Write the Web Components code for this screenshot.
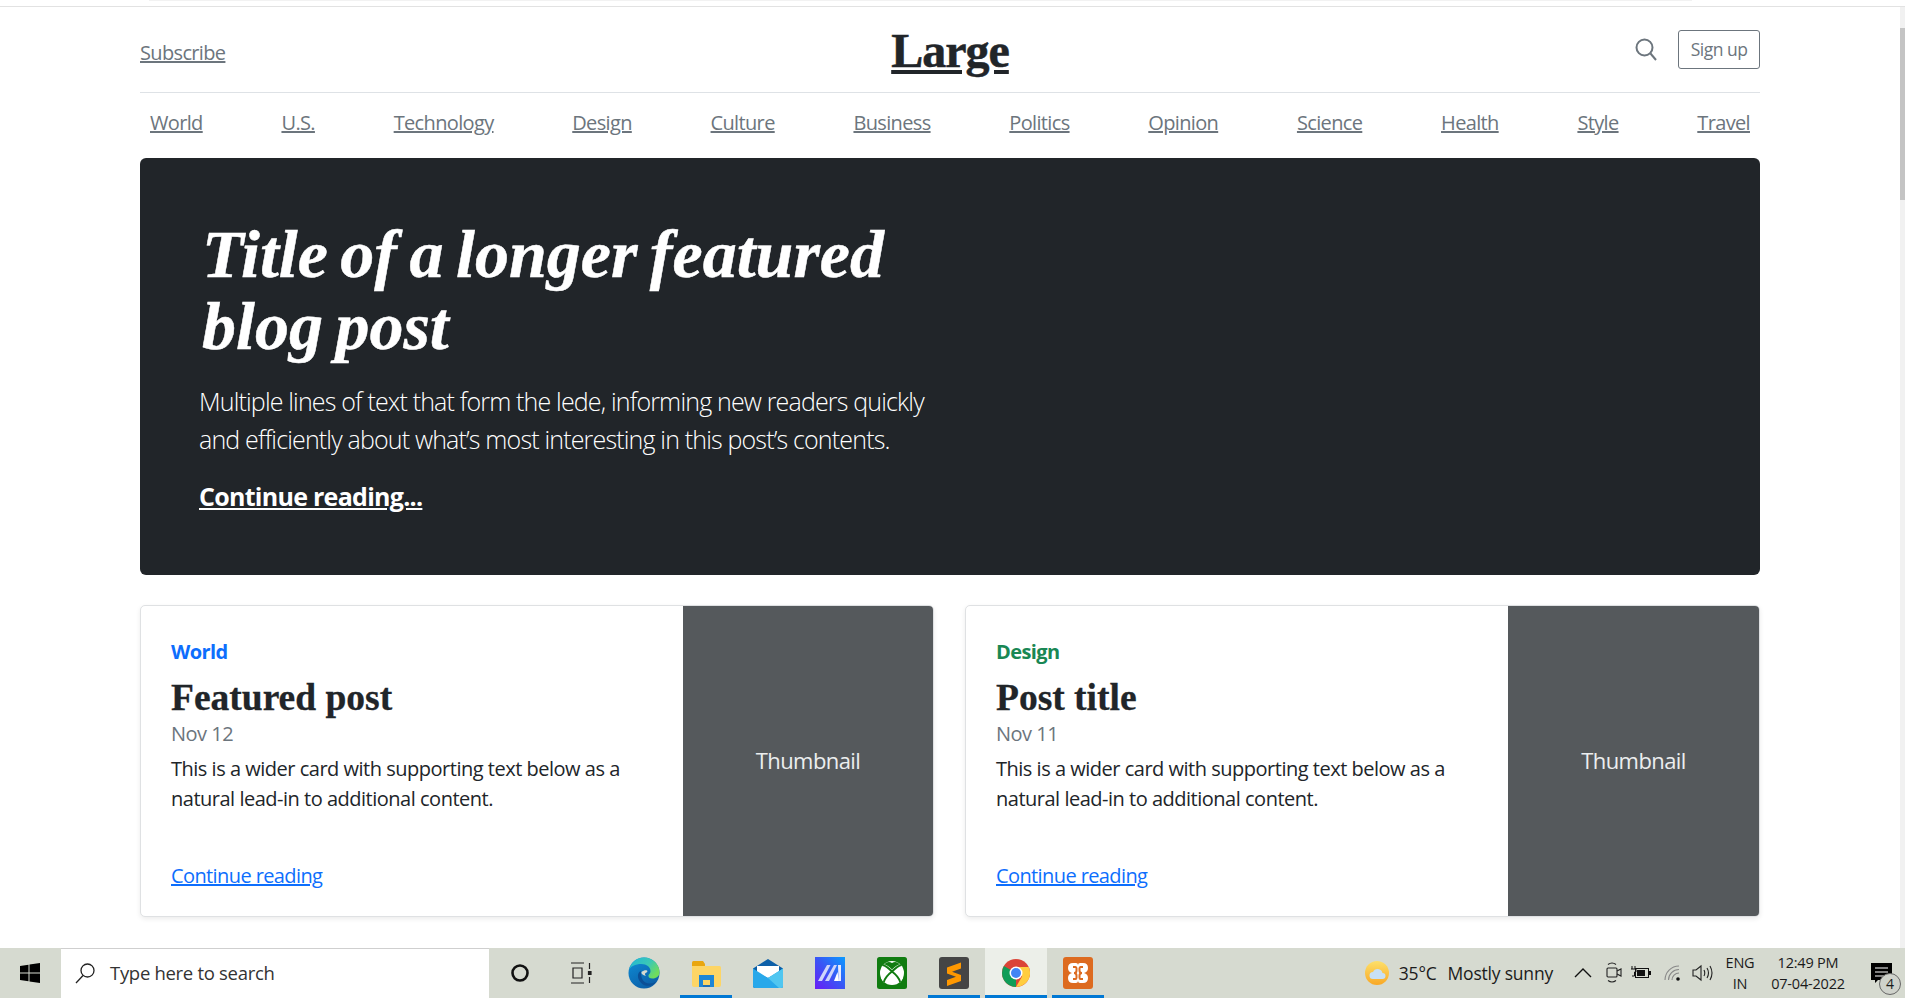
<!DOCTYPE html>
<html lang="en">
<head>
<meta charset="utf-8">
<title>Large</title>
<style>
    html, body { margin: 0; height: 100%; overflow: hidden; background: #fff; }
    body {
        display: flex;
        flex-direction: column;
        font-family: "Open Sans", "Liberation Sans", sans-serif;
        color: #212529;
    }
</style>
</head>
<body>
<blog-browser>
    <blog-header></blog-header>
    <blog-nav></blog-nav>
    <blog-hero></blog-hero>
    <div slot="cards">
        <blog-card category="World" color="#0d6efd" title="Featured post" date="Nov 12" thumb="250"></blog-card>
        <blog-card category="Design" color="#198754" title="Post title" date="Nov 11" thumb="251"></blog-card>
    </div>
</blog-browser>
<win-taskbar></win-taskbar>

<script>
// small helper, every element just sets its shadow html
class Base extends HTMLElement {
    render(html) {
        this.attachShadow({ mode: 'open' });
        this.shadowRoot.innerHTML = html;
    }
}

class BlogBrowser extends Base {
    constructor() {
        super();
        this.render(`
            <style>
                :host { display: flex; flex: 1; min-height: 0; flex-direction: column; }
                .chrome { height: 1px; margin: 0 213px 0 149px; background: #f2f2f2; flex: none; }
                .gap { height: 5px; flex: none; }
                .line { height: 1px; background: #e2e2e2; flex: none; }
                .row { display: flex; flex: 1; min-height: 0; }
                .page { flex: 1; min-width: 0; padding: 0 140px 0 140px; overflow: hidden; }
                .bar { width: 5px; flex: none; background: #f1f1f1; padding-top: 21px; box-sizing: border-box; }
                .thumb { height: 172px; background: #c4c4c4; }
                ::slotted([slot=cards]) { display: grid; grid-template-columns: 794px 795px; column-gap: 31px; }
            </style>
            <div class="chrome"></div>
            <div class="gap"></div>
            <div class="line"></div>
            <div class="row">
                <div class="page"><slot></slot><slot name="cards"></slot></div>
                <div class="bar"><div class="thumb"></div></div>
            </div>
        `);
    }
}

class BlogHeader extends Base {
    constructor() {
        super();
        this.render(`
            <style>
                :host { display: grid; grid-template-columns: 1fr auto 1fr; align-items: center; height: 85px; border-bottom: 1px solid #dee2e6; box-sizing: content-box; }
                a { color: #6c757d; }
                .sub { font-size: 20px; letter-spacing: -.65px; padding-top: 5px; }
                .logo { font: 700 48px "Liberation Serif", serif; color: #212529; line-height: 1; letter-spacing: -1px; -webkit-text-stroke: .5px #212529; padding-top: 2px; }
                .right { display: flex; justify-content: flex-end; align-items: center; gap: 20px; padding-bottom: 1px; }
                .btn { display: block; width: 82px; height: 39px; box-sizing: border-box; border: 1px solid #6c757d; border-radius: 3px; color: #6c757d; font-size: 17.5px; letter-spacing: -.5px; text-align: center; line-height: 36px; }
                svg { display: block; }
            </style>
            <a class="sub" href="#">Subscribe</a>
            <a class="logo" href="#">Large</a>
            <div class="right">
                <svg width="24" height="24" viewBox="0 0 24 24" fill="none" stroke="#6c757d" stroke-width="2"><circle cx="10.5" cy="10.5" r="8"/><path d="M16.500 16.500L22 23"/></svg>
                <span class="btn">Sign up</span>
            </div>
        `);
    }
}

class BlogNav extends Base {
    constructor() {
        super();
        const items = ['World', 'U.S.', 'Technology', 'Design', 'Culture', 'Business', 'Politics', 'Opinion', 'Science', 'Health', 'Style', 'Travel'];
        this.render(`
            <style>
                :host { display: flex; justify-content: space-between; padding: 0 10px; height: 65px; align-items: flex-start; }
                a { color: #6c757d; font-size: 20px; letter-spacing: -.65px; line-height: 30px; margin-top: 15px; }
            </style>
            ${items.map(i => `<a href="#">${i}</a>`).join('')}
        `);
    }
}

class BlogHero extends Base {
    constructor() {
        super();
        this.render(`
            <style>
                :host { display: block; height: 417px; box-sizing: border-box; background: #212529; border-radius: 6px; padding: 60px 60px 60px 59px; color: #fff; margin-bottom: 30px; }
                h1 { margin: 0 0 21px 3px; font: italic 700 68px/72px "Liberation Serif", serif; width: 760px; word-spacing: -4.500px; -webkit-text-stroke: .5px #fff; }
                p { margin: 0 0 20px; font-size: 25px; line-height: 37.5px; font-weight: 300; width: 760px; letter-spacing: -.83px; }
                a { color: #fff; font-weight: 700; font-size: 25px; letter-spacing: -.72px; }
                .more { margin: 0; font-size: 20px; line-height: 37px; }
            </style>
            <h1>Title of a longer featured blog post</h1>
            <p>Multiple lines of text that form the lede, informing new readers quickly and efficiently about what’s most interesting in this post’s contents.</p>
            <div class="more"><a href="#">Continue reading...</a></div>
        `);
    }
}

class BlogCard extends Base {
    constructor() {
        super();
        const a = n => this.getAttribute(n);
        this.render(`
            <style>
                :host { display: flex; height: 312px; box-sizing: border-box; border: 1px solid #dfe1e3; border-radius: 5px; box-shadow: 0 2px 5px rgba(0,0,0,.08); overflow: hidden; background: #fff; }
                .body { flex: 1; min-width: 0; padding: 31px 30px 25px 30px; display: flex; flex-direction: column; font-size: 20px; line-height: 30px; letter-spacing: -.49px; }
                .cat { font-weight: 700; color: ${a('color')}; margin-bottom: 10px; line-height: 30px; letter-spacing: -.6px; }
                h3 { margin: 0; font: 700 37.500px/42px "Liberation Serif", serif; letter-spacing: 0; -webkit-text-stroke: .3px #212529; }
                .date { color: #6c757d; margin-bottom: 5px; }
                p { margin: 0; }
                a { color: #0d6efd; margin-top: auto; letter-spacing: -.6px; }
                .thumb { width: ${a('thumb')}px; flex: none; background: #55595c; color: #eceeef; display: flex; align-items: center; justify-content: center; font-size: 22px; letter-spacing: -.6px; padding-bottom: 3px; box-sizing: border-box; }
            </style>
            <div class="body">
                <div class="cat">${a('category')}</div>
                <h3>${a('title')}</h3>
                <div class="date">${a('date')}</div>
                <p>This is a wider card with supporting text below as a natural lead-in to additional content.</p>
                <a href="#">Continue reading</a>
            </div>
            <div class="thumb">Thumbnail</div>
        `);
    }
}

class TaskSlot extends Base {
    constructor() {
        super();
        this.render(`
            <style>
                :host { display: flex; width: 62px; height: 50px; align-items: center; justify-content: center; flex: none; box-sizing: border-box; position: relative; }
                :host([running])::after { content: ''; position: absolute; left: 5px; right: 5px; bottom: 0; height: 3px; background: #0078d4; }
                :host([active]) { background: #ecefe9; }
                :host([active])::after { left: 0; right: 0; }
            </style>
            <slot></slot>
        `);
    }
}

class WinTaskbar extends Base {
    constructor() {
        super();
        this.render(`
            <style>
                :host { display: flex; height: 50px; flex: none; background: #d6dad0; font-size: 17.500px; color: #1b1b1b; letter-spacing: -.2px; }
                svg { display: block; flex: none; }
                .start { width: 61px; display: flex; align-items: center; justify-content: center; flex: none; padding-right: 2px; box-sizing: border-box; }
                .search { width: 428px; flex: none; background: #fff; border-top: 1px solid #cfcfcf; box-sizing: border-box; display: flex; align-items: center; padding-left: 13px; padding-bottom: 2px; gap: 14px; font-size: 18.500px; color: #333; letter-spacing: -.3px; }
                .tray { margin-left: auto; display: flex; align-items: center; padding-bottom: 1px; }
                .wx { margin-right: 10px; margin-left: 0; }
                .two { display: flex; flex-direction: column; align-items: center; font-size: 14.500px; line-height: 21px; letter-spacing: -.2px; }
                .note { position: relative; width: 40px; height: 50px; display: flex; align-items: center; justify-content: center; margin-left: 14px; margin-right: 4px; }
                .badge { position: absolute; right: 0; bottom: 3px; width: 22px; height: 22px; box-sizing: border-box; border-radius: 50%; background: #cfd2cb; border: 1px solid #666; font-size: 14px; line-height: 20px; text-align: center; letter-spacing: 0; }
            </style>
            <div class="start">
                <svg width="20" height="20" viewBox="0 0 20 20" fill="#000"><path d="M0 3l8.500-1.200v7.800H0zM9.500 1.600L20 0v9.600H9.500zM0 10.500h8.500v7.800L0 17zM9.500 10.500H20V20L9.500 18.500z"/></svg>
            </div>
            <div class="search">
                <svg width="22" height="22" viewBox="0 0 22 22" fill="none" stroke="#222" stroke-width="1.300"><circle cx="13.500" cy="8.500" r="6.500"/><path d="M9 13.500L2 21"/></svg>
                <span>Type here to search</span>
            </div>
            <task-slot>
                <svg width="20" height="20" viewBox="0 0 20 20" fill="none" stroke="#111" stroke-width="2.600"><circle cx="10" cy="10" r="7.500"/></svg>
            </task-slot>
            <task-slot>
                <svg width="24" height="22" viewBox="0 0 24 22" fill="none" stroke="#222" stroke-width="1.200"><path d="M1 1h13M1 21h13M3 6h9v10H3z"/><path d="M19.500 1v6M19.500 15v6"/><path d="M18.500 9.500h2.500v3h-2.500z" fill="#222"/></svg>
            </task-slot>
            <task-slot>
                <svg width="34" height="34" viewBox="0 0 34 34">
                    <defs>
                        <linearGradient id="eg" x1="0" y1="0" x2="1" y2=".6"><stop offset="0" stop-color="#1fb6d8"/><stop offset=".6" stop-color="#3bc8b5"/><stop offset="1" stop-color="#70dc5c"/></linearGradient>
                        <linearGradient id="eb" x1="0" y1="0" x2=".6" y2="1"><stop offset="0" stop-color="#0f8fd8"/><stop offset="1" stop-color="#0b5fa8"/></linearGradient>
                    </defs>
                    <circle cx="17" cy="17" r="15.500" fill="url(#eb)"/>
                    <path d="M2 14C4 6 10 1.500 17 1.500c9 0 15.500 7 15.500 15 0 3.500-3 6-7 6-3 0-4-1-4-2.500 0-2 2-2 2-5 0-4-4-7-9-7C8 8 3.500 10.500 2 14z" fill="url(#eg)"/>
                    <path d="M14 15c-3 1-4 5-2 9 2.500 5 9 8 15 4 1-.7 1.500-1.500 1.500-2-2 1-4 1.500-6 1.500-6 0-9-5-8.500-12.500z" fill="#0b4f96"/>
                    <path d="M14.500 16c1.500-1.500 3.500-2 5-1.800 1.500.3 1 2-.5 2.500-1.200.5-1.500 2 0 3-1.500 0-5-1-4.500-3.700z" fill="#d6dad0"/>
                </svg>
            </task-slot>
            <task-slot running>
                <svg width="29" height="27" viewBox="0 0 29 27">
                    <path d="M0 2.500Q0 1 1.500 1H11l2 3v2H0z" fill="#e9a60f"/>
                    <path d="M0 6h27.500Q29 6 29 7.500V25q0 2-2 2H2q-2 0-2-2z" fill="#fdd565"/>
                    <path d="M7 15h15v12h-4v-7h-7v7H7z" fill="#1d86d6"/>
                    <path d="M11 25h7v2h-7z" fill="#1d6fb8"/>
                </svg>
            </task-slot>
            <task-slot>
                <svg width="30" height="29" viewBox="0 0 30 29">
                    <path d="M15 0l15 9.500V27q0 2-2 2H2q-2 0-2-2V9.500z" fill="#0c5fa8"/>
                    <path d="M4 7h22v7L15 19 4 14z" fill="#fff"/>
                    <path d="M0 9.500L15 19l15-9.500V27q0 2-2 2H2q-2 0-2-2z" fill="#28a8ea"/>
                    <path d="M15 19l15-9.500V27q0 2-2 2h-2z" fill="#50c6f0"/>
                </svg>
            </task-slot>
            <task-slot>
                <svg width="30" height="32" viewBox="0 0 30 32">
                    <defs><linearGradient id="ma" x1="0" y1="1" x2="1" y2="0"><stop offset="0" stop-color="#6a1cf5"/><stop offset=".5" stop-color="#3a55f5"/><stop offset="1" stop-color="#0a9bff"/></linearGradient></defs>
                    <rect width="30" height="32" fill="url(#ma)"/>
                    <path d="M3 24L12 8h3.500L7 24zM10 24L19 8h3L14 24z" fill="#cfd4fb"/>
                    <path d="M19 24l3.500-9L24 24z" fill="#fff"/>
                    <path d="M23 8h3v16h-2.500z" fill="#e8eafe"/>
                </svg>
            </task-slot>
            <task-slot>
                <svg width="30" height="32" viewBox="0 0 30 32">
                    <rect width="30" height="32" rx="2.500" fill="#107c10"/>
                    <circle cx="15" cy="16" r="12" fill="#fff"/>
                    <path d="M15 12.500Q10 7.500 7 7.500 11 3.500 15 6 19 3.500 23 7.500 20 7.500 15 12.500z" fill="#107c10"/>
                    <path d="M15 15.500Q8 21 6.500 25.500L4 21V12zM15 15.500Q22 21 23.500 25.500L26 21V12z" fill="#fff"/>
                    <path d="M15 14.500Q8.500 19.500 6.800 25M15 14.500Q21.500 19.500 23.200 25M15 14.500Q9 8.500 5.500 8M15 14.500Q21 8.500 24.500 8" fill="none" stroke="#107c10" stroke-width="2"/>
                </svg>
            </task-slot>
            <task-slot running>
                <svg width="30" height="32" viewBox="0 0 30 32">
                    <rect width="30" height="32" rx="3" fill="#454545"/>
                    <path d="M22 5.500v6l-9 3.200 9 3.300v6L8 29v-6l9-3.300L8 16.500v-6z" fill="#ff9800"/>
                </svg>
            </task-slot>
            <task-slot running active>
                <svg width="28" height="28" viewBox="0 0 28 28">
                    <circle cx="14" cy="14" r="14" fill="#db4437"/>
                    <path d="M14 14L1.900 7A14 14 0 0 0 14 28z" fill="#0f9d58"/>
                    <path d="M14 8h12.700A14 14 0 0 1 14 28l6-10.500z" fill="#ffcd40"/>
                    <circle cx="14" cy="14" r="6.500" fill="#fff"/>
                    <circle cx="14" cy="14" r="5" fill="#4285f4"/>
                </svg>
            </task-slot>
            <task-slot running>
                <svg width="30" height="32" viewBox="0 0 30 32">
                    <rect width="30" height="32" rx="3" fill="#dd6b20"/>
                    <path d="M10 6h3q2 0 2 2 0-2 2-2h3q5 0 5 5 0 4-4 5 4 1 4 5 0 5-5 5h-3q-2 0-2-2 0 2-2 2h-3q-5 0-5-5 0-4 4-5-4-1-4-5 0-5 5-5z" fill="#fff"/>
                    <path d="M10 10h2.500q1 0 1 1.500v2q0 2.500-2.500 2.500 2.500 0 2.500 2.500v2q0 1.500-1 1.500H10M20 10h-2.500q-1 0-1 1.500v2q0 2.500 2.500 2.500-2.500 0-2.500 2.500v2q0 1.500 1 1.500H20" fill="none" stroke="#dd6b20" stroke-width="2"/>
                </svg>
            </task-slot>
            <div class="tray">
                <svg class="wx" width="24" height="24" viewBox="0 0 24 24">
                    <defs><linearGradient id="wx" x1="0" y1="0" x2="0" y2="1"><stop offset="0" stop-color="#fde06a"/><stop offset="1" stop-color="#f9a825"/></linearGradient></defs>
                    <circle cx="12" cy="12" r="12" fill="url(#wx)"/>
                    <path d="M8 18a3.500 3.500 0 0 1 0-7 5 5 0 0 1 9.500 1 3 3 0 0 1 0 6z" fill="#c8e0f4"/>
                </svg>
                <span style="margin-right:11px">35°C</span>
                <span style="margin-right:21px">Mostly sunny</span>
                <svg width="18" height="11" viewBox="0 0 18 11" fill="none" stroke="#111" stroke-width="1.400" style="margin-right:14px"><path d="M1 10l8-8 8 8"/></svg>
                <svg width="16" height="21" viewBox="0 0 16 21" fill="none" stroke="#222" stroke-width="1.100" style="margin-right:9px"><path d="M2 2.500Q6-.500 10 2.500M2 18.500Q6 21.500 10 18.500"/><rect x="1" y="6" width="10" height="9" rx="1"/><path d="M11 9l4-2v7l-4-2"/></svg>
                <svg width="20" height="13" viewBox="0 0 20 13" style="margin-right:13px"><path d="M1 0v3M4 0v3M0 3h5v3H3.500v4H1" fill="none" stroke="#111"/><rect x="4.500" y="2.500" width="13" height="9" fill="none" stroke="#111"/><rect x="6" y="4" width="8" height="6" fill="#111"/><rect x="18" y="5" width="2" height="4" fill="#111"/></svg>
                <svg width="18" height="16" viewBox="0 0 18 16" fill="none" stroke="#888" stroke-width="1.100" style="margin-right:10px"><path d="M1 15A14 14 0 0 1 15 1M4.500 15A10.500 10.500 0 0 1 15 4.500M8 15a7 7 0 0 1 7-7"/><circle cx="14" cy="14" r="1.800" fill="#111" stroke="none"/></svg>
                <svg width="21" height="18" viewBox="0 0 21 18" fill="none" stroke="#222" stroke-width="1.100" style="margin-right:12px"><path d="M1 6h3l5-4v14l-5-4H1z"/><path d="M12 6q1.500 3 0 6M15 4q3 5 0 10M18 2q4 7 0 14"/></svg>
                <div class="two" style="width:30px"><span>ENG</span><span>IN</span></div>
                <div class="two" style="margin-left:14px;width:78px"><span>12:49 PM</span><span>07-04-2022</span></div>
                <div class="note">
                    <svg width="21" height="20" viewBox="0 0 21 20"><path d="M0 0h21v17H7l-3 3v-3H0z" fill="#000"/><path d="M4 5h13M4 9h13M4 13h9" stroke="#fff" stroke-width="1.200"/></svg>
                    <span class="badge">4</span>
                </div>
            </div>
        `);
    }
}

customElements.define('blog-browser', BlogBrowser);
customElements.define('blog-header', BlogHeader);
customElements.define('blog-nav', BlogNav);
customElements.define('blog-hero', BlogHero);
customElements.define('blog-card', BlogCard);
customElements.define('task-slot', TaskSlot);
customElements.define('win-taskbar', WinTaskbar);
</script>
</body>
</html>
